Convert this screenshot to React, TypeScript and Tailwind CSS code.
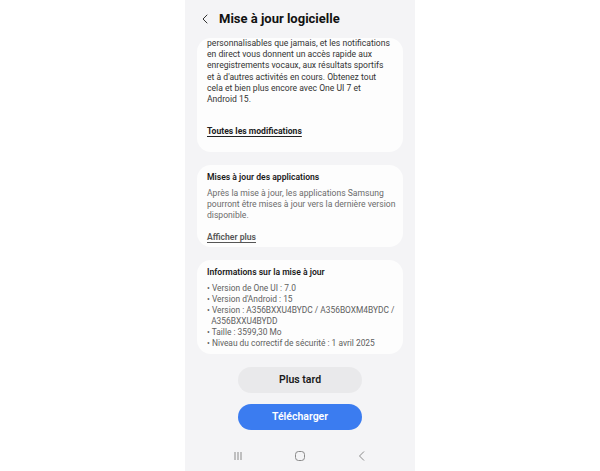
import { ChevronLeft } from 'lucide-react';

const FONT = { fontFamily: 'Roboto, "Noto Sans", sans-serif' };

const INTRO = [
  'personnalisables que jamais, et les notifications',
  'en direct vous donnent un accès rapide aux',
  'enregistrements vocaux, aux résultats sportifs',
  "et à d'autres activités en cours. Obtenez tout",
  'cela et bien plus encore avec One UI 7 et',
  'Android 15.',
];

const APPS = [
  'Après la mise à jour, les applications Samsung',
  'pourront être mises à jour vers la dernière version',
  'disponible.',
];

const INFO = [
  '• Version de One UI : 7.0',
  "• Version d'Android : 15",
  '• Version : A356BXXU4BYDC / A356BOXM4BYDC /',
  '  A356BXXU4BYDD',
  '• Taille : 3599,30 Mo',
  '• Niveau du correctif de sécurité : 1 avril 2025',
];

export default function App() {
  return (
    <div className="w-[600px] h-[471px] bg-white flex justify-center overflow-hidden" style={FONT}>
      <div className="w-[230px] h-full bg-[#f4f4f6] flex flex-col">
        {/* Header */}
        <div className="h-[38px] flex items-center pl-[12px] gap-[6px] shrink-0">
          <ChevronLeft className="w-[16px] h-[16px] text-[#222]" strokeWidth={1.4} />
          <h1 className="text-[13px] font-bold text-[#111]">Mise à jour logicielle</h1>
        </div>

        <div className="flex flex-col gap-[13px] px-[12px]">
          {/* Card 1 */}
          <div className="bg-[#fdfdfd] rounded-[14px] h-[114px] px-[10px] flex flex-col">
            <div className="text-[8.6px] leading-[11.2px] text-[#333]">
              {INTRO.map(l => (
                <div key={l} className="whitespace-nowrap">{l}</div>
              ))}
            </div>
            <div className="mt-[20px] text-[8.6px] font-bold text-[#222] underline underline-offset-[1.5px]">
              Toutes les modifications
            </div>
          </div>

          {/* Card 2 */}
          <div className="bg-[#fdfdfd] rounded-[14px] h-[82px] px-[10px] pt-[7px] flex flex-col">
            <div className="text-[8.6px] leading-[11px] font-semibold text-[#1a1a1a]">Mises à jour des applications</div>
            <div className="mt-[5px] text-[8.6px] leading-[10.8px] text-[#6b6b6b]">
              {APPS.map(l => (
                <div key={l} className="whitespace-nowrap">{l}</div>
              ))}
            </div>
            <div className="mt-[11px] text-[8.6px] font-semibold text-[#555] underline underline-offset-[1.5px]">
              Afficher plus
            </div>
          </div>

          {/* Card 3 */}
          <div className="bg-[#fdfdfd] rounded-[14px] h-[94px] px-[10px] pt-[7px] flex flex-col">
            <div className="text-[8.6px] leading-[11px] font-semibold text-[#1a1a1a]">Informations sur la mise à jour</div>
            <div className="mt-[5px] text-[8.4px] leading-[11px] text-[#606060]">
              {INFO.map(l => (
                <div key={l} className="whitespace-pre">{l}</div>
              ))}
            </div>
          </div>
        </div>

        {/* Buttons */}
        <div className="flex flex-col items-center gap-[11px] mt-[13px]">
          <button className="w-[124px] h-[26px] rounded-full bg-[#e9e9eb] text-[10.5px] font-semibold text-[#1a1a1a]">
            Plus tard
          </button>
          <button className="w-[124px] h-[26px] rounded-full bg-[#3b7cf0] text-[10.5px] font-semibold text-white">
            Télécharger
          </button>
        </div>

        {/* Nav bar */}
        <div className="flex justify-center items-center gap-[50px] mt-[20px]">
          <svg width="12" height="12" viewBox="0 0 12 12" fill="none" stroke="#8a8a8a" strokeWidth="1">
            <path d="M3 2v8M6 2v8M9 2v8" />
          </svg>
          <svg width="12" height="12" viewBox="0 0 12 12" fill="none" stroke="#8a8a8a" strokeWidth="1">
            <rect x="1.5" y="1.5" width="9" height="9" rx="3" />
          </svg>
          <svg width="12" height="12" viewBox="0 0 12 12" fill="none" stroke="#8a8a8a" strokeWidth="1">
            <path d="M8 1.5 L3.5 6 L8 10.5" />
          </svg>
        </div>
      </div>
    </div>
  );
}
